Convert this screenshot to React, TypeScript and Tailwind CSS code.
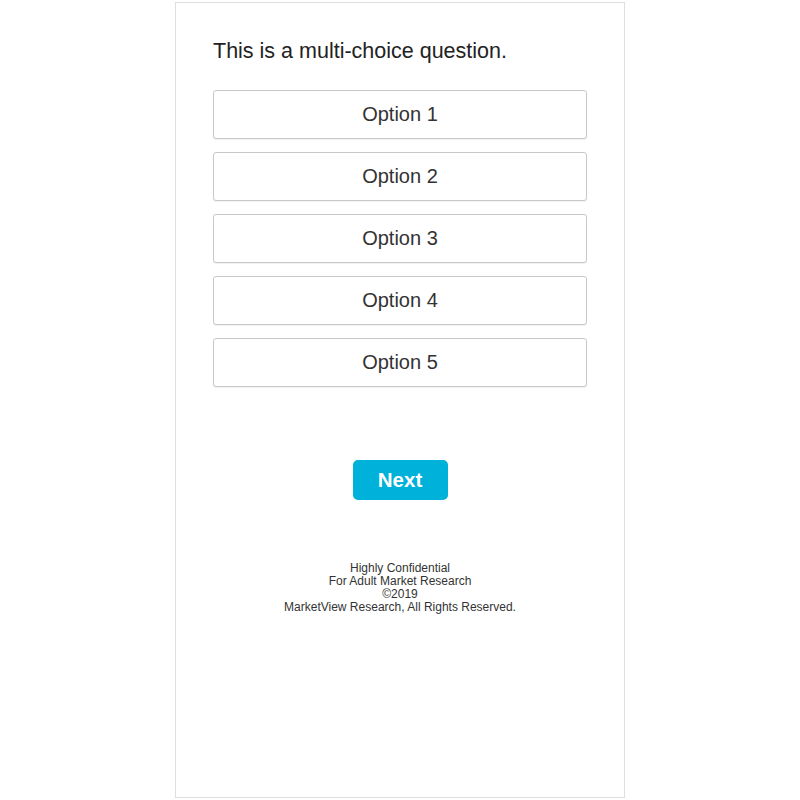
const OPTIONS = ["Option 1", "Option 2", "Option 3", "Option 4", "Option 5"];

export default function App() {
  return (
    <div className="min-h-screen bg-white font-['Liberation_Sans',Arial,sans-serif]">
      <div className="mx-auto mt-[2px] h-[796px] w-[450px] border border-[#dedede] px-[37px] pt-[34px]">
        <p className="text-[21.5px] leading-[28px] text-[#222]">This is a multi-choice question.</p>

        <div className="mt-[25px] flex flex-col gap-[13px]">
          {OPTIONS.map((o) => (
            <button
              key={o}
              className="flex h-[49px] w-full items-center justify-center rounded-[3px] border border-[#c8c8c8] bg-white pb-[2px] text-[20px] text-[#333] shadow-[0_1px_1px_rgba(0,0,0,0.06)]"
            >
              {o}
            </button>
          ))}
        </div>

        <div className="mt-[73px] flex justify-center">
          <button className="h-[40px] w-[95px] rounded-[5px] bg-[#00b1da] text-[20.5px] font-bold text-white">
            Next
          </button>
        </div>

        <div className="mt-[62px] text-center text-[12px] leading-[13px] text-[#333]">
          <div>Highly Confidential</div>
          <div>For Adult Market Research</div>
          <div>©2019</div>
          <div>MarketView Research, All Rights Reserved.</div>
        </div>
      </div>
    </div>
  );
}
